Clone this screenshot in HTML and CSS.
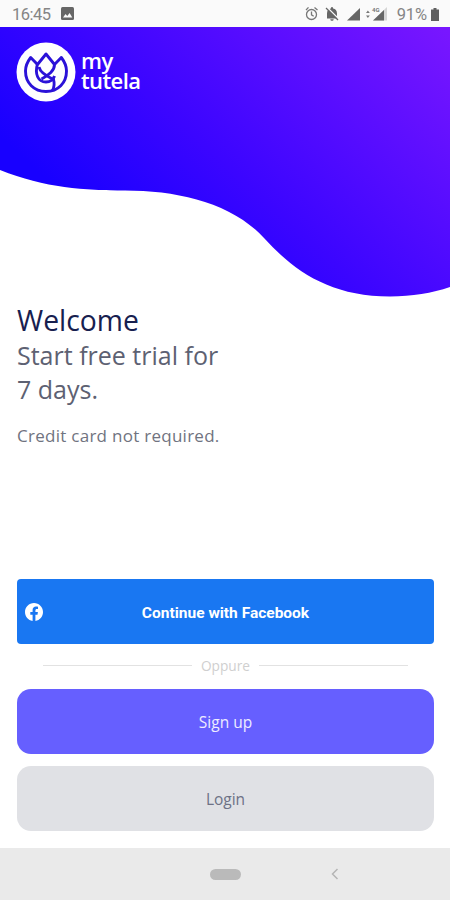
FILE: index.html
```html
<!DOCTYPE html>
<html lang="en">
<head>
<meta charset="utf-8">
<title>my tutela</title>
<link rel="stylesheet" href="styles.css">
</head>
<body>
<div class="status">
  <span class="time">16:45</span>
  <svg class="photo" width="13" height="13" viewBox="0 0 13 13"><rect width="13" height="13" rx="1.5" fill="#666"/><path d="M2 10.5L4.5 7l1.8 2L8.600 6l2.700 4.500z" fill="#fafafa"/></svg>
  <svg class="sys" width="82" height="18" viewBox="0 0 82 18">
    <g fill="none" stroke="#777" stroke-width="1.300"><circle cx="4.500" cy="9.500" r="5"/><path d="M4.500 6.500v3.300l2.200 1.400M-1 5l2.500-2.600M10.500 5l-3-2.600"/></g>
    <path d="M20 13.500V8.500c0-3 1.500-4.600 3.900-5 0-2 2.200-2 2.200 0 2.400.4 3.900 2 3.900 5v3.500l1.500 1.500zM23.300 14.200h3.400c0 2.200-3.400 2.200-3.400 0z" fill="#666"/>
    <path d="M20 2.200L32 14.200" stroke="#fafafa" stroke-width="1.500"/><path d="M19 3L31 15" stroke="#666" stroke-width="1.300"/>
    <path d="M40 15.500L53 3v12.500z" fill="#666"/>
    <path d="M59 8l1.900-2.600L62.800 8zM59 10.500l1.900 2.600 1.900-2.600z" fill="#777"/>
    <path d="M66 15.500L80 2v13.500z" fill="#d5d5d5"/><path d="M66 15.500l11-10.500v10.500z" fill="#666"/>
    <text class="net" x="65" y="6.500">4G</text>
  </svg>
  <span class="pct">91%</span>
  <svg class="battery" width="8" height="13" viewBox="0 0 8 13"><path d="M0 1.500h2.500V0h3v1.500H8V13H0z" fill="#5f5f5f"/></svg>
</div>
<header class="hero">
  <svg class="wave" width="450" height="271" viewBox="0 0 450 271">
    <defs><linearGradient id="sky" gradientUnits="userSpaceOnUse" x1="110" y1="210" x2="365" y2="-70">
      <stop offset="0" stop-color="#1800ff"/><stop offset=".35" stop-color="#3b05ff"/><stop offset="1" stop-color="#7816ff"/>
    </linearGradient></defs>
    <path fill="url(#sky)" d="M0 0H450V260C432 266 412 269.500 390 269.500C330 269.500 294 244 264 211C232 176 178 163.500 125 163.500C85 163.500 45 161 0 143Z"/>
  </svg>
  <div class="logo">
    <svg width="60" height="60" viewBox="0 0 60 60">
      <circle cx="30" cy="30" r="29.500" fill="#fff"/>
      <g fill="none" stroke="#2b12d8" stroke-width="2.900" stroke-linejoin="round">
        <path d="M21.500 22.500L14.700 15.500C10.500 21 9.500 25 9.500 29C9.500 41 18 49.500 30 49.500C42 49.500 50.500 41 50.500 29C50.500 25 49.500 21 45.300 15.500L38.500 22.500"/>
        <path d="M21.500 22.500L30 12L38.500 22.500C38.500 29 33 32.500 25.500 37"/>
        <path d="M21.500 22C18.500 32 22 40 30 40C34 40 37.500 37.500 38.500 34"/>
        <path d="M23 25C24 30 29 33.500 37.500 37.500C38.800 42 38 45.500 36.500 48.500"/>
      </g>
    </svg>
    <div class="brand"><span class="my">my</span><span>tutela</span></div>
  </div>
</header>
<main class="content">
  <h1>Welcome</h1>
  <p class="lead">Start free trial for<br>7 days.</p>
  <p class="note">Credit card not required.</p>
  <div class="actions">
    <button class="btn facebook">
      <svg class="fb" width="18" height="18" viewBox="0 0 24 24"><path fill="#fff" d="M24 12.070C24 5.410 18.630 0 12 0S0 5.410 0 12.070C0 18.100 4.390 23.090 10.130 24v-8.440H7.080v-3.490h3.050V9.410c0-3.020 1.790-4.690 4.530-4.690 1.310 0 2.690.23 2.690.23v2.970h-1.520c-1.490 0-1.950.93-1.950 1.890v2.260h3.320l-.53 3.490h-2.790V24C19.610 23.090 24 18.100 24 12.070z"/></svg>
      <span class="fb-label">Continue with Facebook</span>
    </button>
    <div class="divider"><span>Oppure</span></div>
    <button class="btn signup">Sign up</button>
    <button class="btn login">Login</button>
  </div>
</main>
<nav class="navbar">
  <span class="pill"></span>
  <svg class="back" width="8" height="12" viewBox="0 0 8 12"><path d="M6.500 1L1.500 6l5 5" fill="none" stroke="#b5b5b5" stroke-width="1.500"/></svg>
</nav>
</body>
</html>
```
FILE: styles.css
```css
* { box-sizing: border-box; }
body {
  margin: 0;
  width: 450px;
  height: 900px;
  display: flex;
  flex-direction: column;
  overflow: hidden;
  background: #fff;
  font-family: "Open Sans", "Noto Sans", sans-serif;
}
.status {
  height: 27px;
  flex: none;
  display: flex;
  align-items: center;
  padding: 2px 11px 0 12px;
  background: #fafafa;
  color: #858585;
  font: 16.5px Roboto, sans-serif;
}
.time { width: 49px; letter-spacing: -0.5px; }
.photo { position: relative; top: -1px; }
.sys { margin: 0 0 2px auto; overflow: visible; }
.net { font: bold 6px Roboto, sans-serif; fill: #777; }
.pct { margin: 0 4px 0 8px; letter-spacing: -0.1px; }
.hero { position: relative; height: 271px; flex: none; padding: 15px 16px; }
.wave { position: absolute; left: 0; top: 0; }
.logo { position: relative; display: flex; gap: 5px; }
.brand {
  display: flex;
  flex-direction: column;
  padding-top: 8px;
  font: 600 22px/20px "Open Sans", sans-serif;
  letter-spacing: -0.6px;
  color: #fff;
}
.content { flex: 1; display: flex; flex-direction: column; padding: 0 16px 17px 17px; }
h1 {
  margin: 3px 0 0;
  font-size: 28.3px;
  line-height: 38px;
  font-weight: 400;
  color: #17204f;
}
.lead { margin: -1px 0 0; font-size: 25px; line-height: 34px; color: #5d6172; font-weight: 400; }
.note { margin: 18px 0 0; font-size: 17px; line-height: 24px; color: #707380; font-weight: 400; letter-spacing: 0.27px; }
.actions { margin-top: auto; display: flex; flex-direction: column; }
.btn {
  height: 65px;
  border: 0;
  border-radius: 14px;
  padding: 0;
  font: 15.5px "Open Sans", sans-serif;
}
.facebook {
  display: grid;
  grid-template-columns: 34px 1fr 34px;
  align-items: center;
  border-radius: 4px;
  background: #1977f2;
  color: #fff;
  font: bold 15.5px Roboto, sans-serif;
}
.fb { margin-left: 8px; }
.fb-label { padding-top: 3px; }
.divider {
  height: 45px;
  display: flex;
  align-items: center;
  gap: 9px;
  padding: 0 26px 2px;
  color: #cfcfcf;
  font-size: 13.7px;
}
.divider::before, .divider::after { content: ""; flex: 1; height: 1px; background: #e2e2e2; }
.signup { background: #665fff; color: #eeecff; }
.login { margin-top: 12px; background: #e0e1e5; color: #6d7185; }
.navbar {
  height: 52px;
  flex: none;
  display: grid;
  grid-template-columns: 210px 31px 90px auto;
  align-items: center;
  background: #eaeaea;
}
.pill { grid-column: 2; height: 11px; border-radius: 6px; background: #bababa; }
.back { grid-column: 4; }
```
